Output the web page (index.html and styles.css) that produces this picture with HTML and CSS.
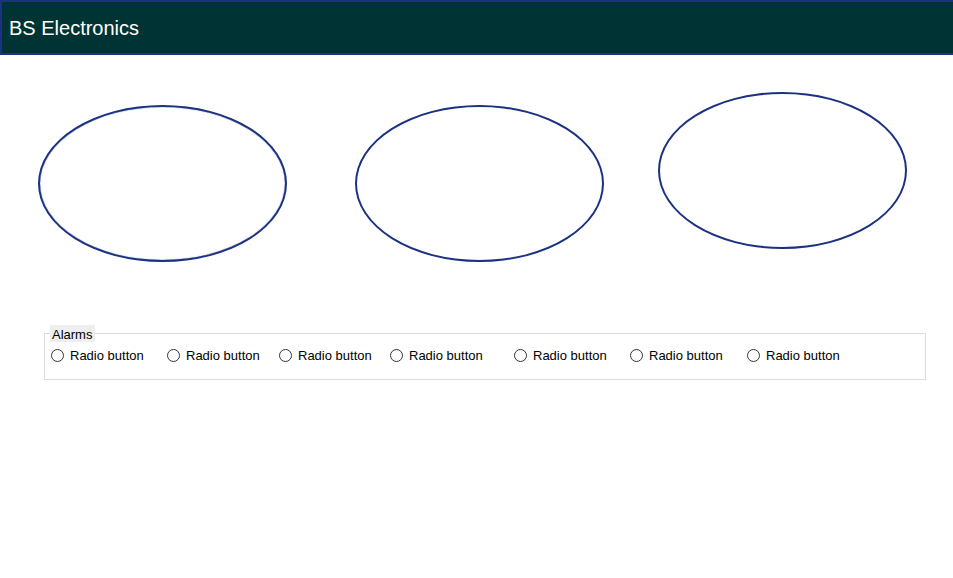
FILE: index.html
```html
<!DOCTYPE html>
<html lang="en">
<head>
  <meta charset="utf-8">
  <title>BS Electronics</title>
  <link rel="stylesheet" href="styles.css">
</head>
<body>
  <header class="banner">
    <h1 class="banner-title">BS Electronics</h1>
  </header>
  <main>
    <div class="dials">
      <div class="dial dial-strong"></div>
      <div class="dial"></div>
      <div class="dial dial-raised"></div>
    </div>
    <fieldset class="alarms">
      <legend class="alarms-title">Alarms</legend>
      <div class="options">
        <label class="option"><input class="radio" type="radio" name="alarm">Radio button</label>
        <label class="option"><input class="radio" type="radio" name="alarm">Radio button</label>
        <label class="option"><input class="radio" type="radio" name="alarm">Radio button</label>
        <label class="option"><input class="radio" type="radio" name="alarm">Radio button</label>
        <label class="option"><input class="radio" type="radio" name="alarm">Radio button</label>
        <label class="option"><input class="radio" type="radio" name="alarm">Radio button</label>
        <label class="option"><input class="radio" type="radio" name="alarm">Radio button</label>
      </div>
    </fieldset>
  </main>
</body>
</html>
```
FILE: styles.css
```css
* {
  box-sizing: border-box;
}

body {
  margin: 0;
  background: #fff;
  color: #000;
  font: 13px/15px "Liberation Sans", Arial, sans-serif;
}

.banner {
  padding: 14px 7px 13px;
  background: #033;
  border: 2px solid #1a3281;
  border-right: 0;
}

.banner-title {
  margin: 0;
  color: #fff;
  font-size: 20px;
  font-weight: 400;
  line-height: 24px;
}

.dials {
  display: grid;
  grid-template-columns: 317fr 303fr 295fr;
  align-items: end;
  height: 207px;
  padding: 37px 0 0 38px;
}

.dial {
  width: 249px;
  height: 157px;
  border: 2px solid #1a3281;
  border-radius: 50%;
}

.dial-strong {
  box-shadow: inset 0 0 1px #1a3281;
}

.dial-raised {
  align-self: start;
}

.alarms {
  min-width: 0;
  margin: 63px 27px 0 44px;
  padding: 6px 0 16px 6px;
  border: 1px solid #dcdcdc;
}

.alarms-title {
  margin-left: -1px;
  padding: 2px 3px 0 2px;
  background: #eee;
}

.options {
  display: grid;
  grid-template-columns: 116fr 112fr 111fr 124fr 116fr 117fr 178fr;
}

.option {
  display: flex;
  align-items: center;
  gap: 6px;
  white-space: nowrap;
}

.radio {
  flex: none;
  width: 13px;
  height: 13px;
  margin: 0;
  appearance: none;
  background: #fff;
  border: 1px solid #333;
  border-radius: 50%;
}

.radio:checked {
  background: #333;
  box-shadow: inset 0 0 0 3px #fff;
}
```
